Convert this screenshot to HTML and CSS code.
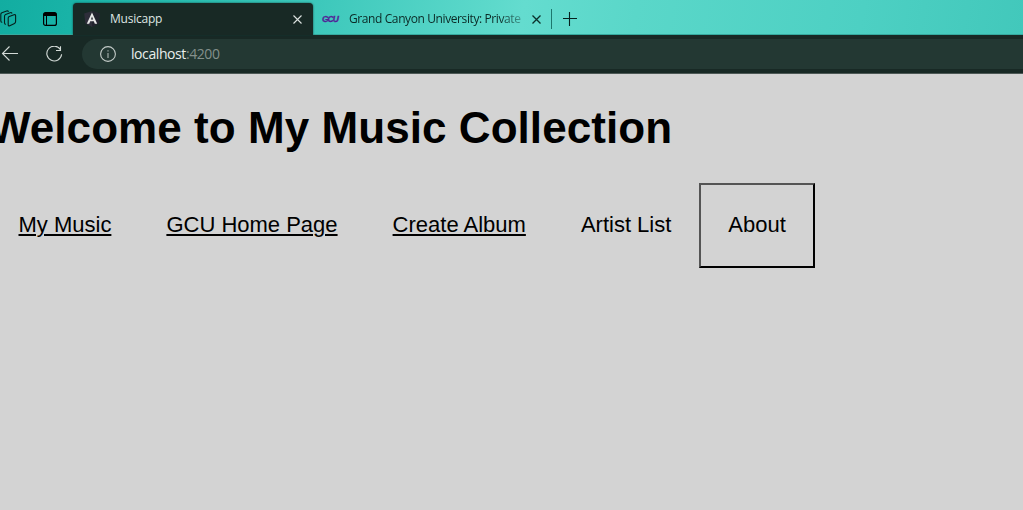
FILE: index.html
```
<!DOCTYPE html>
<html lang="en">
<head>
<meta charset="utf-8">
<title>Musicapp</title>
<link rel="stylesheet" href="styles.css">
</head>
<body>
<header class="tabs">
  <svg class="workspaces" width="17" height="18" viewBox="0 0 17 18"><g fill="none" stroke="#06201d" stroke-width="1.1" stroke-linejoin="round" stroke-linecap="round"><path d="M9.3 6.4 14 4.7Q15.6 4.3 15.6 5.8V11.6Q15.6 12.9 14.5 13.4L9.8 15.7Q8.2 16.3 8.2 14.7V8Q8.2 6.8 9.3 6.4Z"/><path d="M5.6 14.2Q4.5 14 4.5 12.7V6.2Q4.5 5 5.6 4.5L10.2 2.7Q11.4 2.3 11.9 3.1"/><path d="M1.9 12.2Q.8 12 .8 10.7V4.4Q.8 3.2 1.9 2.7L6.6 1Q7.8.6 8.3 1.4"/></g></svg>
  <svg class="tab-actions" width="14" height="14" viewBox="0 0 14 14"><rect x=".6" y=".6" width="12.8" height="12.8" rx="2" fill="none" stroke="#000" stroke-width="1.2"/><path d="M.6 4V2.5Q.6.6 2.5.6H11.5Q13.4.6 13.4 2.5V4Z"/><path d="M3.5 4V13" stroke="#000"/></svg>
  <div class="tab active">
    <svg class="angular" width="16" height="16" viewBox="0 0 16 16"><path fill="#2e2e3a" d="M8 0 15.8 2.6 14.6 12.4 8 16 1.4 12.4.2 2.6Z"/><path fill="#22232e" d="M8 0 15.8 2.6 14.6 12.4 8 16Z"/><path fill="#e8e8e8" fill-rule="evenodd" d="M8 1.4 13.2 12.8H10.8L9.8 10.3H6.2L5.2 12.8H2.8ZM8 5.4 6.9 8.4H9.1Z"/></svg>
    <span class="tab-title">Musicapp</span>
    <svg class="close" width="9" height="9" viewBox="0 0 9 9"><path d="M.5.5 8.5 8.5M8.5.5.5 8.5" stroke="#dce2e0" stroke-width="1.1"/></svg>
  </div>
  <div class="tab idle">
    <span class="gcu">GCU</span>
    <span class="tab-title long">Grand Canyon University: Private</span>
    <svg class="close" width="9" height="9" viewBox="0 0 9 9"><path d="M.5.5 8.5 8.5M8.5.5.5 8.5" stroke="#0b2f2a" stroke-width="1.3"/></svg>
  </div>
  <span class="divider"></span>
  <svg class="plus" width="14" height="14" viewBox="0 0 14 14"><path d="M6.5 0V14M0 6.5H14" stroke="#06201d" stroke-width="1.1"/></svg>
</header>
<div class="toolbar">
  <svg class="back" width="18" height="16" viewBox="0 0 18 16"><path d="M17 7.5H1.5M8.5.5 1.5 7.5 8.5 14.5" fill="none" stroke="#d3dad7" stroke-width="1.1"/></svg>
  <svg class="reload" width="17" height="17" viewBox="0 0 17 17"><path d="M14.5 3.6A7.4 7.4 0 1 0 15.6 8.3M14.5.2V4.5H10" fill="none" stroke="#d3dad7" stroke-width="1.1"/></svg>
  <div class="address">
    <svg width="16" height="16" viewBox="0 0 16 16"><circle cx="8" cy="8" r="7.4" fill="none" stroke="#c4ccc9" stroke-width="1.1"/><path d="M8 7V12M8 4.2V5.4" stroke="#a9b3af" stroke-width="1.1"/></svg>
    <span class="url">localhost<span class="port">:4200</span></span>
  </div>
</div>
<main class="page">
  <h1 class="heading">Welcome to My Music Collection</h1>
  <nav class="menu">
    <a class="item link">My Music</a>
    <a class="item link">GCU Home Page</a>
    <a class="item link">Create Album</a>
    <a class="item">Artist List</a>
    <button class="item about">About</button>
  </nav>
</main>
</body>
</html>
```
FILE: styles.css
```
* { box-sizing: border-box; }
body {
  margin: 0;
  height: 510px;
  overflow: hidden;
  background: #d3d3d3;
  font-family: "Liberation Sans", Arial, sans-serif;
}
svg { display: block; flex: none; }
.tabs {
  display: flex;
  align-items: center;
  height: 35px;
  padding-top: 3px;
  background: linear-gradient(100deg, #12ada1 0, #19b3a7 7%, #3dc8bb 31%, #5dd9cb 48%, #64dccf 51%, #5ad7c9 62%, #4dd0c3 84%, #42c8bb 100%);
  box-shadow: inset 0 -1px 0 #36aa9f;
  font: 12px "Open Sans", "Noto Sans", sans-serif;
}
.workspaces { margin: 0 27px 0 0; }
.tab-actions { margin-left: -1px; }
.tab { display: flex; align-items: center; height: 32px; }
.active {
  width: 240px;
  margin-left: 16px;
  padding: 0 11px;
  border-radius: 4px 4px 0 0;
  background: #182925;
  box-shadow: 0 0 2px #123c37;
  color: #dfe5e3;
}
.tab-title {
  margin-left: 10px;
  padding-bottom: 1px;
  white-space: nowrap;
  letter-spacing: -0.24px;
}
.active .close { margin-left: auto; }
.idle { width: 238px; padding-left: 9px; color: #0b2925; }
.gcu {
  width: 17px;
  color: #522398;
  font: italic 900 8.5px "Liberation Sans", sans-serif;
  letter-spacing: -1px;
  -webkit-text-stroke: 0.3px #522398;
}
.long {
  width: 174px;
  letter-spacing: -0.4px;
  -webkit-mask-image: linear-gradient(90deg, #000 150px, rgba(0,0,0,.3) 174px);
  mask-image: linear-gradient(90deg, #000 150px, rgba(0,0,0,.3) 174px);
}
.idle .close { margin-left: 9px; }
.divider { width: 1px; height: 20px; background: #1c776d; }
.plus { margin-left: 11px; }
.toolbar {
  display: flex;
  align-items: center;
  height: 39px;
  background: #182925;
  border-bottom: 1px solid #4c5855;
}
.back { margin-left: 1px; }
.reload { margin-left: 27px; }
.address {
  display: flex;
  align-items: center;
  flex: 1;
  height: 30px;
  margin-left: 19px;
  padding-left: 18px;
  border-radius: 15px 0 0 15px;
  background: #233833;
}
.url {
  margin-left: 15px;
  padding-bottom: 1px;
  color: #e9eeec;
  font: 14px "Open Sans", "Noto Sans", sans-serif;
  letter-spacing: -0.42px;
}
.port { color: #84908c; }
.page { padding-top: 28px; }
.heading {
  margin: 0 0 30px -11px;
  font-size: 44px;
  line-height: 51px;
  letter-spacing: 0.06px;
  white-space: nowrap;
}
.menu { display: flex; align-items: center; margin-left: -9px; }
.item {
  padding: 26.5px 27.5px 28.5px;
  color: #000;
  font: 22px/26px "Liberation Sans", Arial, sans-serif;
  white-space: nowrap;
}
.link {
  text-decoration: underline 2px;
  text-underline-offset: 2px;
}
.about {
  border: 2px outset #000;
  background: transparent;
}
```
